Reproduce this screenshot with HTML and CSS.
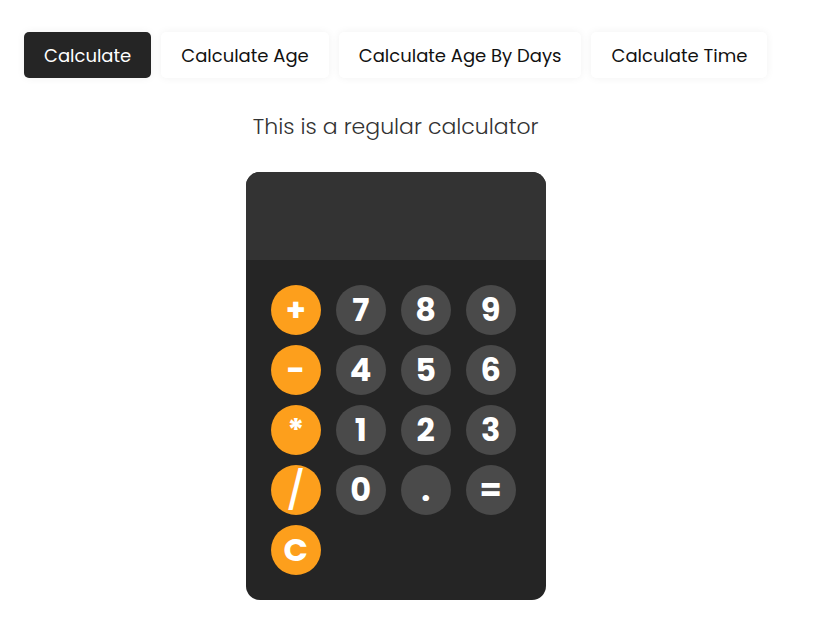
FILE: index.html
```html
<!DOCTYPE html>
<html lang="en">
<head>
<meta charset="utf-8">
<title>Calculator</title>
<link rel="stylesheet" href="styles.css">
</head>
<body>
<div class="app">
  <nav class="tabs">
    <button class="tab active">Calculate</button>
    <button class="tab">Calculate Age</button>
    <button class="tab">Calculate Age By Days</button>
    <button class="tab">Calculate Time</button>
  </nav>
  <section class="panel">
    <p class="subtitle">This is a regular calculator</p>
    <div class="calc">
      <div class="display"></div>
      <div class="keys">
        <button class="key op">+</button>
        <button class="key">7</button>
        <button class="key">8</button>
        <button class="key">9</button>
        <button class="key op">-</button>
        <button class="key">4</button>
        <button class="key">5</button>
        <button class="key">6</button>
        <button class="key op star">*</button>
        <button class="key">1</button>
        <button class="key">2</button>
        <button class="key">3</button>
        <button class="key op slash">/</button>
        <button class="key">0</button>
        <button class="key">.</button>
        <button class="key">=</button>
        <button class="key op">C</button>
      </div>
    </div>
  </section>
</div>
</body>
</html>
```
FILE: styles.css
```css
* { box-sizing: border-box; }
html, body { margin: 0; padding: 0; background: #ffffff; }
body { font-family: "Poppins", "Open Sans", "Noto Sans", sans-serif; color: #111; }

.app {
  width: fit-content;
  margin: 32px 0 0 24px;
}

.tabs {
  display: flex;
  gap: 10px;
}

.tab {
  height: 46px;
  padding: 0 20px;
  border: none;
  border-radius: 5px;
  background: #ffffff;
  color: #111;
  font-family: inherit;
  font-size: 18px;
  box-shadow: 0 0 8px rgba(0, 0, 0, 0.06);
  cursor: pointer;
}

.tab.active {
  background: #252525;
  color: #ffffff;
}

.panel {
  display: flex;
  flex-direction: column;
  align-items: center;
}

.subtitle {
  margin: 34px 0 0;
  font-size: 22px;
  font-weight: 300;
  color: #333;
  line-height: 30px;
}

.calc {
  margin-top: 30px;
  width: 300px;
  height: 428px;
  border-radius: 14px;
  overflow: hidden;
  background: #252525;
  display: flex;
  flex-direction: column;
}

.display {
  height: 88px;
  background: #333333;
}

.keys {
  padding: 25px;
  display: grid;
  grid-template-columns: repeat(4, 50px);
  column-gap: 15px;
  row-gap: 10px;
}

.key {
  width: 50px;
  height: 50px;
  border-radius: 50%;
  border: none;
  padding: 0;
  background: #4a4a4a;
  color: #ffffff;
  font-family: "Poppins", "Inter", sans-serif;
  font-weight: 700;
  font-size: 32px;
  line-height: 50px;
  display: flex;
  align-items: center;
  justify-content: center;
}

.key.op {
  background: #fd9f1c;
}

.key.slash {
  font-size: 38px;
  font-weight: 500;
}
```
